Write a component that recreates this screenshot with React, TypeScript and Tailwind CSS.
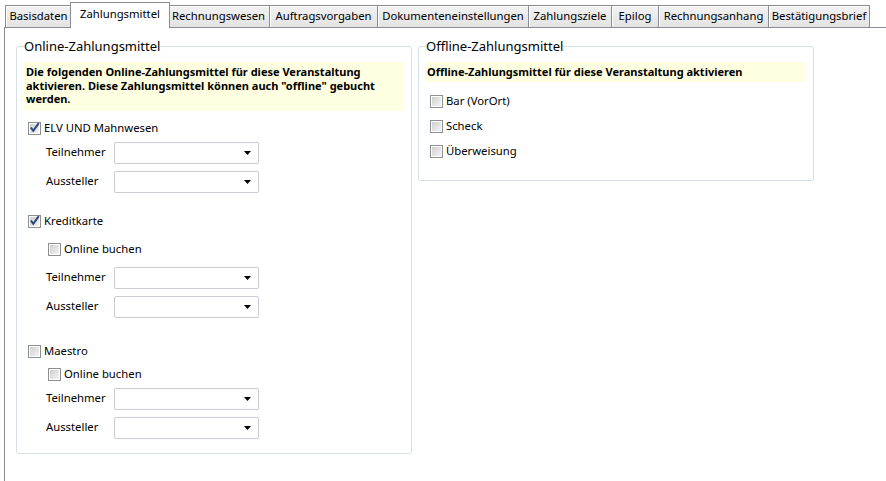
import React from "react";

const tabs = [
  { label: "Basisdaten", w: "w-[67px]" },
  { label: "Zahlungsmittel", w: "w-[100px]", active: true },
  { label: "Rechnungswesen", w: "w-[103px]" },
  { label: "Auftragsvorgaben", w: "w-[109px]" },
  { label: "Dokumenteneinstellungen", w: "w-[152px]" },
  { label: "Zahlungsziele", w: "w-[84px]" },
  { label: "Epilog", w: "w-[48px]" },
  { label: "Rechnungsanhang", w: "w-[111px]" },
  { label: "Bestätigungsbrief", w: "w-[102px]" },
];

function Checkbox({ checked, label }: { checked?: boolean; label: string }) {
  return (
    <div className="flex h-[16px] items-center gap-[3px]">
      <div className="flex h-[13px] w-[13px] items-center justify-center border border-[#8e8f8f] bg-white">
        <div className="relative h-[9px] w-[9px] bg-gradient-to-br from-[#cfcfcf] to-[#f4f4f4]">
          {checked && (
            <svg viewBox="0 0 9 9" className="absolute -left-px -top-[2px] h-[11px] w-[11px]">
              <path d="M1.5 4.5 L3.5 7.2 L8 1" fill="none" stroke="#2c4a7e" strokeWidth="1.7" />
            </svg>
          )}
        </div>
      </div>
      <span className="text-[11.3px] text-black">{label}</span>
    </div>
  );
}

function SelectRow({ label, className = "" }: { label: string; className?: string }) {
  return (
    <div className={`flex h-[22px] items-center ${className}`}>
      <span className="w-[68px] text-[11.3px] text-black">{label}</span>
      <div className="flex h-[22px] w-[145px] items-center justify-end rounded-[2px] border border-[#c9ccd1] bg-white pr-[7px]">
        <svg width="7" height="4" viewBox="0 0 7 4">
          <path d="M0 0 H7 L3.5 4 Z" fill="#000" />
        </svg>
      </div>
    </div>
  );
}

export default function App() {
  return (
    <div
      className="h-[481px] w-[886px] overflow-hidden bg-white text-black"
      style={{ fontFamily: '"Noto Sans", "Open Sans", sans-serif' }}
    >
      <div className="ml-[4px] flex h-full flex-col">
        {/* Tab strip */}
        <div className="flex h-[28px] shrink-0 items-end border-b border-[#898c95] pl-[2px]">
          {tabs.map((t) =>
            t.active ? (
              <div
                key={t.label}
                className={`relative z-10 -mx-[2px] -mb-px flex h-[26px] ${t.w} items-start justify-center border border-b-0 border-[#898c95] bg-white pt-[3px] text-[11.3px]`}
              >
                {t.label}
              </div>
            ) : (
              <div
                key={t.label}
                className={`-ml-px flex h-[22px] ${t.w} items-center justify-center border border-b-0 border-[#898c95] bg-gradient-to-b from-[#f2f2f2] to-[#e3e3e3] text-[11.3px] shadow-[inset_1px_1px_0_#fff]`}
              >
                {t.label}
              </div>
            )
          )}
        </div>

        {/* Panel */}
        <div className="flex flex-1 items-start gap-[6px] border-l border-[#898c95] pl-[11px] pt-[10px]">
          {/* Online group */}
          <fieldset className="w-[396px] rounded-[3px] border border-[#d5dfe5] px-[7px] pb-[14px]">
            <legend className="text-[13px] leading-[17px]">Online-Zahlungsmittel</legend>
            <div className="mt-[7px] bg-[#ffffe1] pb-[5px] pl-[2px] pt-[3px] text-[11px] font-bold leading-[13.5px]">
              Die folgenden Online-Zahlungsmittel für diese Veranstaltung
              <br />
              aktivieren. Diese Zahlungsmittel können auch "offline" gebucht
              <br />
              werden.
            </div>
            <div className="flex flex-col pl-[4px]">
              <div className="mt-[10px]">
                <Checkbox checked label="ELV UND Mahnwesen" />
              </div>
              <div className="pl-[18px]">
                <SelectRow label="Teilnehmer" className="mt-[5px]" />
                <SelectRow label="Aussteller" className="mt-[7px]" />
              </div>
              <div className="mt-[21px]">
                <Checkbox checked label="Kreditkarte" />
              </div>
              <div className="pl-[18px]">
                <div className="mt-[12px] pl-[2px]">
                  <Checkbox label="Online buchen" />
                </div>
                <SelectRow label="Teilnehmer" className="mt-[9px]" />
                <SelectRow label="Aussteller" className="mt-[7px]" />
              </div>
              <div className="mt-[26px]">
                <Checkbox label="Maestro" />
              </div>
              <div className="pl-[18px]">
                <div className="mt-[7px] pl-[2px]">
                  <Checkbox label="Online buchen" />
                </div>
                <SelectRow label="Teilnehmer" className="mt-[5px]" />
                <SelectRow label="Aussteller" className="mt-[7px]" />
              </div>
            </div>
          </fieldset>

          {/* Offline group */}
          <fieldset className="w-[396px] rounded-[3px] border border-[#d5dfe5] px-[7px] pb-[21px]">
            <legend className="text-[13px] leading-[17px]">Offline-Zahlungsmittel</legend>
            <div className="mt-[7px] h-[20px] bg-[#ffffe1] pl-[1px] text-[11px] font-bold leading-[20px]">
              Offline-Zahlungsmittel für diese Veranstaltung aktivieren
            </div>
            <div className="flex flex-col gap-[9px] pl-[4px] pt-[11px]">
              <Checkbox label="Bar (VorOrt)" />
              <Checkbox label="Scheck" />
              <Checkbox label="Überweisung" />
            </div>
          </fieldset>
        </div>
      </div>
    </div>
  );
}
